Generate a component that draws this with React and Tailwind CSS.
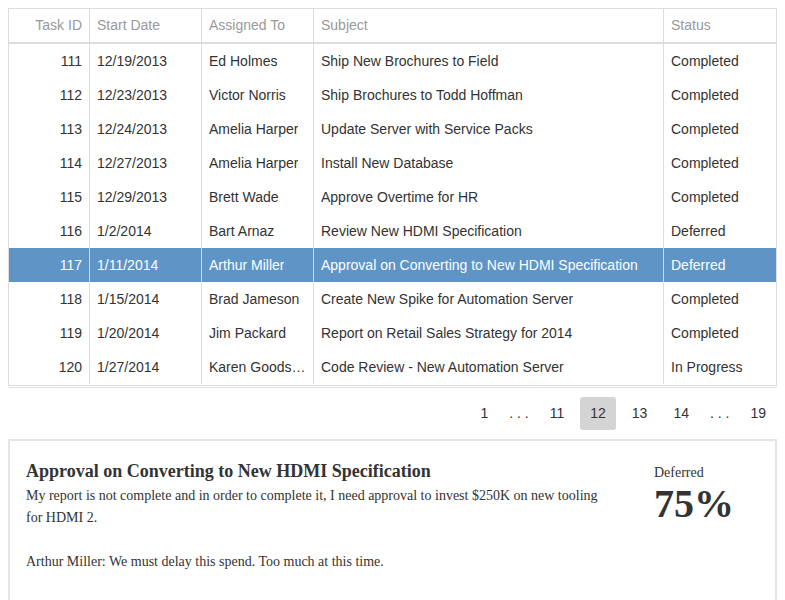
import React, { useState } from 'react';

const tasks = [
  { id: 111, start: "12/19/2013", who: "Ed Holmes", subject: "Ship New Brochures to Field", status: "Completed" },
  { id: 112, start: "12/23/2013", who: "Victor Norris", subject: "Ship Brochures to Todd Hoffman", status: "Completed" },
  { id: 113, start: "12/24/2013", who: "Amelia Harper", subject: "Update Server with Service Packs", status: "Completed" },
  { id: 114, start: "12/27/2013", who: "Amelia Harper", subject: "Install New Database", status: "Completed" },
  { id: 115, start: "12/29/2013", who: "Brett Wade", subject: "Approve Overtime for HR", status: "Completed" },
  { id: 116, start: "1/2/2014", who: "Bart Arnaz", subject: "Review New HDMI Specification", status: "Deferred" },
  { id: 117, start: "1/11/2014", who: "Arthur Miller", subject: "Approval on Converting to New HDMI Specification", status: "Deferred" },
  { id: 118, start: "1/15/2014", who: "Brad Jameson", subject: "Create New Spike for Automation Server", status: "Completed" },
  { id: 119, start: "1/20/2014", who: "Jim Packard", subject: "Report on Retail Sales Strategy for 2014", status: "Completed" },
  { id: 120, start: "1/27/2014", who: "Karen Goodson", subject: "Code Review - New Automation Server", status: "In Progress" },
];

const pages = ["1", "...", "11", "12", "13", "14", "...", "19"];

const App = () => {
  const [selected, setSelected] = useState(117);
  const [page, setPage] = useState("12");

  return (
    <div className="min-h-screen bg-white p-2 font-['Liberation_Sans',Arial,sans-serif] text-[14px]">
      {/* grid */}
      <div className="border border-[#ddd]">
        <div className="grid h-[35px] grid-cols-[81px_112px_112px_350px_112px] border-b-2 border-[#ddd] text-[#999]">
          <div className="flex items-center justify-end border-r border-[#ddd] px-[7px]">Task ID</div>
          <div className="flex items-center border-r border-[#ddd] px-[7px]">Start Date</div>
          <div className="flex items-center border-r border-[#ddd] px-[7px]">Assigned To</div>
          <div className="flex items-center border-r border-[#ddd] px-[7px]">Subject</div>
          <div className="flex items-center px-[7px]">Status</div>
        </div>
        <div className="pb-px">
          {tasks.map((t) => {
            const on = t.id === selected;
            const cell = on
              ? "flex items-center overflow-hidden whitespace-nowrap border-r border-[#c9daeb] px-[7px]"
              : "flex items-center overflow-hidden whitespace-nowrap border-r border-[#ddd] px-[7px]";
            return (
              <div
                key={t.id}
                onClick={() => setSelected(t.id)}
                className={
                  on
                    ? "grid h-[34px] cursor-pointer grid-cols-[81px_112px_112px_350px_112px] bg-[#5e94c6] text-white"
                    : "grid h-[34px] cursor-pointer grid-cols-[81px_112px_112px_350px_112px] text-[#333]"
                }
              >
                <div className={cell + " justify-end"}>{t.id}</div>
                <div className={cell}>{t.start}</div>
                <div className={cell}>
                  <span className="truncate">{t.who}</span>
                </div>
                <div className={cell}>
                  <span className="truncate">{t.subject}</span>
                </div>
                <div className="flex items-center whitespace-nowrap px-[7px]">{t.status}</div>
              </div>
            );
          })}
        </div>
      </div>

      {/* pager */}
      <div className="mt-px flex justify-end gap-[6px] border-t border-[#e5e5e5] py-[9px] pr-px text-[#333]">
        {pages.map((p, i) =>
          p === "..." ? (
            <span key={i} className="h-[33px] px-[5px] leading-[33px]">. . .</span>
          ) : (
            <button
              key={i}
              onClick={() => setPage(p)}
              className={
                page === p
                  ? "h-[33px] rounded-[3px] bg-[#d4d4d4] px-[10px] leading-[33px]"
                  : "h-[33px] rounded-[3px] px-[10px] leading-[33px]"
              }
            >
              {p}
            </button>
          )
        )}
      </div>

      {/* details */}
      <div className="flex min-h-[200px] justify-between border-2 border-[#e5e5e5] px-4 pt-4 font-['Liberation_Serif','Times_New_Roman',serif] text-[#333]">
        <div className="w-[584px]">
          <h2 className="text-[18px] font-bold leading-7">Approval on Converting to New HDMI Specification</h2>
          <p className="text-[14px] leading-[22px]">
            My report is not complete and in order to complete it, I need approval to invest $250K on new tooling for HDMI 2.
          </p>
          <p className="mt-[22px] text-[14px] leading-[22px]">Arthur Miller: We must delay this spend. Too much at this time.</p>
        </div>
        <div className="w-[105px]">
          <div className="pt-[2px] text-[14px] leading-7">Deferred</div>
          <div className="-mt-[3px] text-[40px] font-bold leading-none">75%</div>
        </div>
      </div>
    </div>
  );
};

export default App;
